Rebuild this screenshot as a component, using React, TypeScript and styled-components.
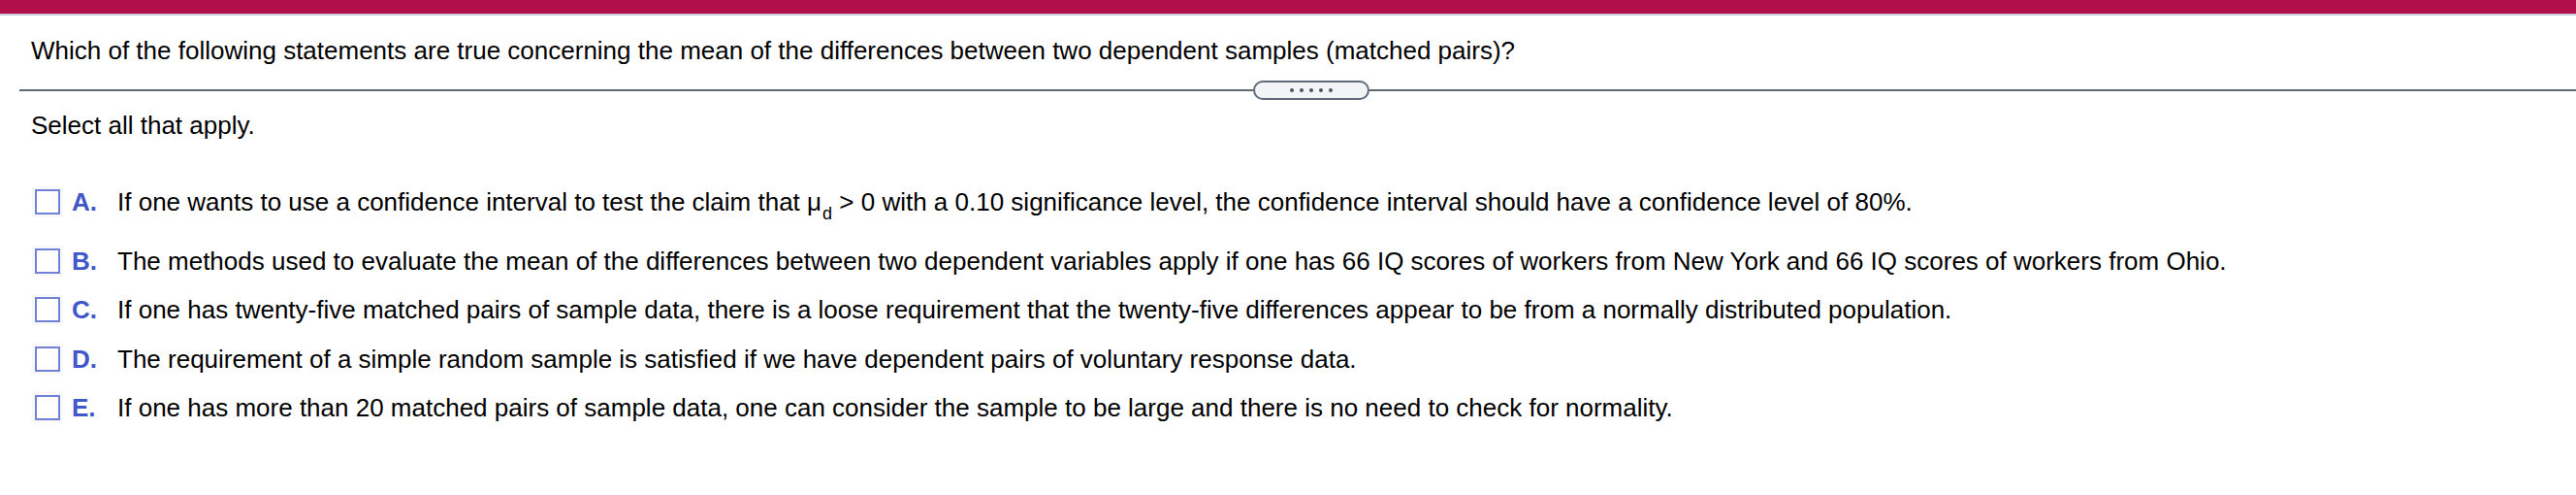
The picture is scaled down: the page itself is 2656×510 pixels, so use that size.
import React from "react";
import styled, { createGlobalStyle } from "styled-components";

const GlobalStyle = createGlobalStyle`
  html, body {
    margin: 0;
    padding: 0;
    background: #ffffff;
    overflow-x: hidden;
  }
  body {
    font-family: "Liberation Sans", Arial, sans-serif;
    color: #000000;
  }
`;

const Page = styled.div`
  display: flex;
  flex-direction: column;
  width: 100%;
  font-size: 26px;
  line-height: 30px;
`;

const TopBar = styled.div`
  height: 14px;
  background: #b10e4b;
  border-bottom: 2px solid #c6cbd6;
`;

const Question = styled.p`
  margin: 21px 0 0 0;
  padding-left: 32px;
`;

const Divider = styled.div`
  display: grid;
  grid-template-columns: 1fr 120px 1fr;
  align-items: center;
  margin: 16px -28px 0 20px;
  height: 20px;
`;

const Rule = styled.div`
  height: 2px;
  background: #5e6a78;
`;

const Pill = styled.button`
  box-sizing: border-box;
  height: 20px;
  width: 120px;
  padding: 0;
  border: 2px solid #5e6a78;
  border-radius: 10px;
  background: #f3f4f6;
  display: flex;
  align-items: center;
  justify-content: center;
  gap: 6px;
`;

const Dot = styled.span`
  width: 4px;
  height: 4px;
  border-radius: 50%;
  background: #4b5563;
`;

const Instruction = styled.p`
  margin: 11px 0 0 0;
  padding-left: 32px;
`;

const Options = styled.div`
  display: flex;
  flex-direction: column;
  gap: 20.5px;
  margin-top: 49px;
  padding-left: 36px;
`;

const OptionRow = styled.label<{ $tall?: boolean }>`
  display: flex;
  align-items: flex-start;
  padding-bottom: ${(p) => (p.$tall ? "10px" : "0")};
`;

const Box = styled.span`
  box-sizing: border-box;
  flex: 0 0 26px;
  width: 26px;
  height: 26px;
  margin-top: 2px;
  border: 2px solid #7082d8;
  background: #ffffff;
  box-shadow: 0 0 0 3px rgba(120, 120, 140, 0.05);
`;

const Letter = styled.span`
  flex: 0 0 47px;
  margin-left: 12px;
  font-weight: bold;
  color: #4157c8;
`;

const OptionText = styled.span`
  white-space: nowrap;
`;

const Sub = styled.sub`
  font-size: 18px;
  line-height: 0;
  vertical-align: -9px;
  margin-left: 1px;
`;

const options: { letter: string; text: React.ReactNode; tall?: boolean }[] = [
  {
    letter: "A.",
    tall: true,
    text: (
      <>
        If one wants to use a confidence interval to test the claim that μ<Sub>d</Sub> {">"} 0 with a 0.10
        significance level, the confidence interval should have a confidence level of 80%.
      </>
    ),
  },
  {
    letter: "B.",
    text: "The methods used to evaluate the mean of the differences between two dependent variables apply if one has 66 IQ scores of workers from New York and 66 IQ scores of workers from Ohio.",
  },
  {
    letter: "C.",
    text: "If one has twenty-five matched pairs of sample data, there is a loose requirement that the twenty-five differences appear to be from a normally distributed population.",
  },
  {
    letter: "D.",
    text: "The requirement of a simple random sample is satisfied if we have dependent pairs of voluntary response data.",
  },
  {
    letter: "E.",
    text: "If one has more than 20 matched pairs of sample data, one can consider the sample to be large and there is no need to check for normality.",
  },
];

export default function App() {
  return (
    <>
      <GlobalStyle />
      <Page>
        <TopBar />
        <Question>
          Which of the following statements are true concerning the mean of the differences between two
          dependent samples (matched pairs)?
        </Question>
        <Divider>
          <Rule />
          <Pill aria-label="more">
            {[0, 1, 2, 3, 4].map((i) => (
              <Dot key={i} />
            ))}
          </Pill>
          <Rule />
        </Divider>
        <Instruction>Select all that apply.</Instruction>
        <Options>
          {options.map((o) => (
            <OptionRow key={o.letter} $tall={o.tall}>
              <Box />
              <Letter>{o.letter}</Letter>
              <OptionText>{o.text}</OptionText>
            </OptionRow>
          ))}
        </Options>
      </Page>
    </>
  );
}
